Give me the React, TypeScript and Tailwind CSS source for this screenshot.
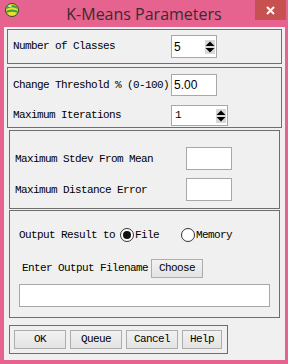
import React from "react";

const Spin = () => (
  <svg width="10" height="14" viewBox="0 0 10 14" className="shrink-0">
    <rect x="0" y="0" width="10" height="14" fill="#d8d8d8" />
    <polygon points="5,1.5 9.5,6 0.5,6" fill="#000" />
    <polygon points="0.5,8 9.5,8 5,12.5" fill="#000" />
  </svg>
);

const Btn = ({ label, w }: { label: string; w: string }) => (
  <div
    className={`${w} h-[19px] flex items-center justify-center border border-[#adadad] bg-gradient-to-b from-[#f2f2f2] to-[#e3e3e3] text-[11px] tracking-[-0.6px] text-black`}
  >
    {label}
  </div>
);

export default function App() {
  return (
    <div className="w-[288px] h-[364px] bg-[#e6628f] flex flex-col overflow-hidden font-['Liberation_Mono',monospace] text-[11px] tracking-[-0.6px] text-black">
      {/* Title bar */}
      <div className="relative h-[27px] shrink-0 flex items-center">
        <svg width="16" height="16" viewBox="0 0 16 16" className="absolute left-[4px] top-[2px]">
          <ellipse cx="8" cy="8" rx="6.5" ry="6.5" fill="#e8e030" stroke="#2a4a2a" strokeWidth="1" />
          <path d="M2.5 5 Q8 1 13.5 5 L13.5 7 Q8 3.5 2.5 7 Z" fill="#3aa040" />
          <path d="M2 9 Q8 6 14 9 L13.5 11 Q8 8.5 2.5 11 Z" fill="#3aa040" />
          <ellipse cx="6" cy="4" rx="2" ry="1" fill="#c8f0a0" />
        </svg>
        <div className="w-full text-center font-['Open_Sans',sans-serif] text-[16px] tracking-normal text-[#3b2b30] leading-none mt-[1px]">
          K-Means Parameters
        </div>
        <div className="absolute right-[2px] top-0 w-[31px] h-[20px] bg-[#c75050] flex items-center justify-center">
          <svg width="9" height="9" viewBox="0 0 9 9">
            <path d="M1 1 L8 8 M8 1 L1 8" stroke="#fff" strokeWidth="2" />
          </svg>
        </div>
      </div>

      {/* Content */}
      <div className="flex-1 ml-[4px] mr-[3px] mb-[4px] bg-[#f0f0f0] flex flex-col pt-[2px]">
        {/* Panel 1 */}
        <div className="ml-[3px] w-[275px] h-[35px] border border-[#6e6e6e] flex items-center pl-[5px]">
          <div className="w-[158px]">Number of Classes</div>
          <div className="w-[46px] h-[23px] bg-white border border-[#a8a8a8] flex items-center pl-[2px] pr-[1px]">
            <span className="flex-1 font-['Liberation_Sans',sans-serif] text-[12px] tracking-normal">5</span>
            <Spin />
          </div>
        </div>

        {/* Panel 2 */}
        <div className="mt-[3px] ml-[3px] w-[275px] h-[61px] border border-[#6e6e6e] flex flex-col pl-[5px] pt-[6px]">
          <div className="flex items-center h-[22px]">
            <div className="w-[158px]">Change Threshold % (0-100)</div>
            <div className="w-[46px] h-[22px] bg-white border border-[#a8a8a8] flex items-center pl-[2px]">
              <span className="font-['Liberation_Sans',sans-serif] text-[12px] tracking-normal">5.00</span>
            </div>
          </div>
          <div className="flex items-center h-[21px] mt-[9px]">
            <div className="w-[158px]">Maximum Iterations</div>
            <div className="w-[57px] h-[21px] bg-white border border-[#a8a8a8] flex items-center pl-[3px] pr-[1px]">
              <span className="flex-1">1</span>
              <Spin />
            </div>
          </div>
        </div>

        {/* Panel 3 */}
        <div className="mt-[2px] ml-[5px] w-[271px] h-[79px] border border-[#6e6e6e] flex flex-col pl-[5px] pt-[16px]">
          <div className="flex items-center h-[23px]">
            <div className="w-[171px] mt-[1px]">Maximum Stdev From Mean</div>
            <div className="w-[46px] h-[23px] bg-white border border-[#a8a8a8]" />
          </div>
          <div className="flex items-center h-[23px] mt-[8px]">
            <div className="w-[171px] mt-[1px]">Maximum Distance Error</div>
            <div className="w-[46px] h-[23px] bg-white border border-[#a8a8a8]" />
          </div>
        </div>

        {/* Panel 4 */}
        <div className="mt-[1px] ml-[5px] w-[271px] h-[108px] border border-[#6e6e6e] flex flex-col pl-[9px]">
          <div className="flex items-center h-[16px] mt-[16px]">
            <span className="w-[101px]">Output Result to</span>
            <span className="w-[14px] h-[14px] rounded-full border border-[#333] bg-white flex items-center justify-center">
              <span className="w-[8px] h-[8px] rounded-full bg-[#111]" />
            </span>
            <span className="ml-[1px] w-[46px]">File</span>
            <span className="w-[14px] h-[14px] rounded-full border border-[#333] bg-white" />
            <span className="ml-[1px]">Memory</span>
          </div>
          <div className="flex items-center h-[19px] mt-[16px] pl-[3px]">
            <span className="w-[129px]">Enter Output Filename</span>
            <div className="w-[52px] h-[19px] border border-[#adadad] bg-gradient-to-b from-[#f2f2f2] to-[#e3e3e3] flex items-center justify-center">
              Choose
            </div>
          </div>
          <div className="mt-[6px] w-[251px] h-[23px] bg-white border border-[#a8a8a8]" />
        </div>

        {/* Buttons */}
        <div className="mt-[7px] ml-[5px] w-[219px] h-[29px] border border-[#6e6e6e] flex items-center pl-[4px] gap-[4px]">
          <Btn label="OK" w="w-[52px]" />
          <Btn label="Queue" w="w-[52px]" />
          <Btn label="Cancel" w="w-[52px]" />
          <Btn label="Help" w="w-[40px]" />
        </div>
      </div>
    </div>
  );
}
